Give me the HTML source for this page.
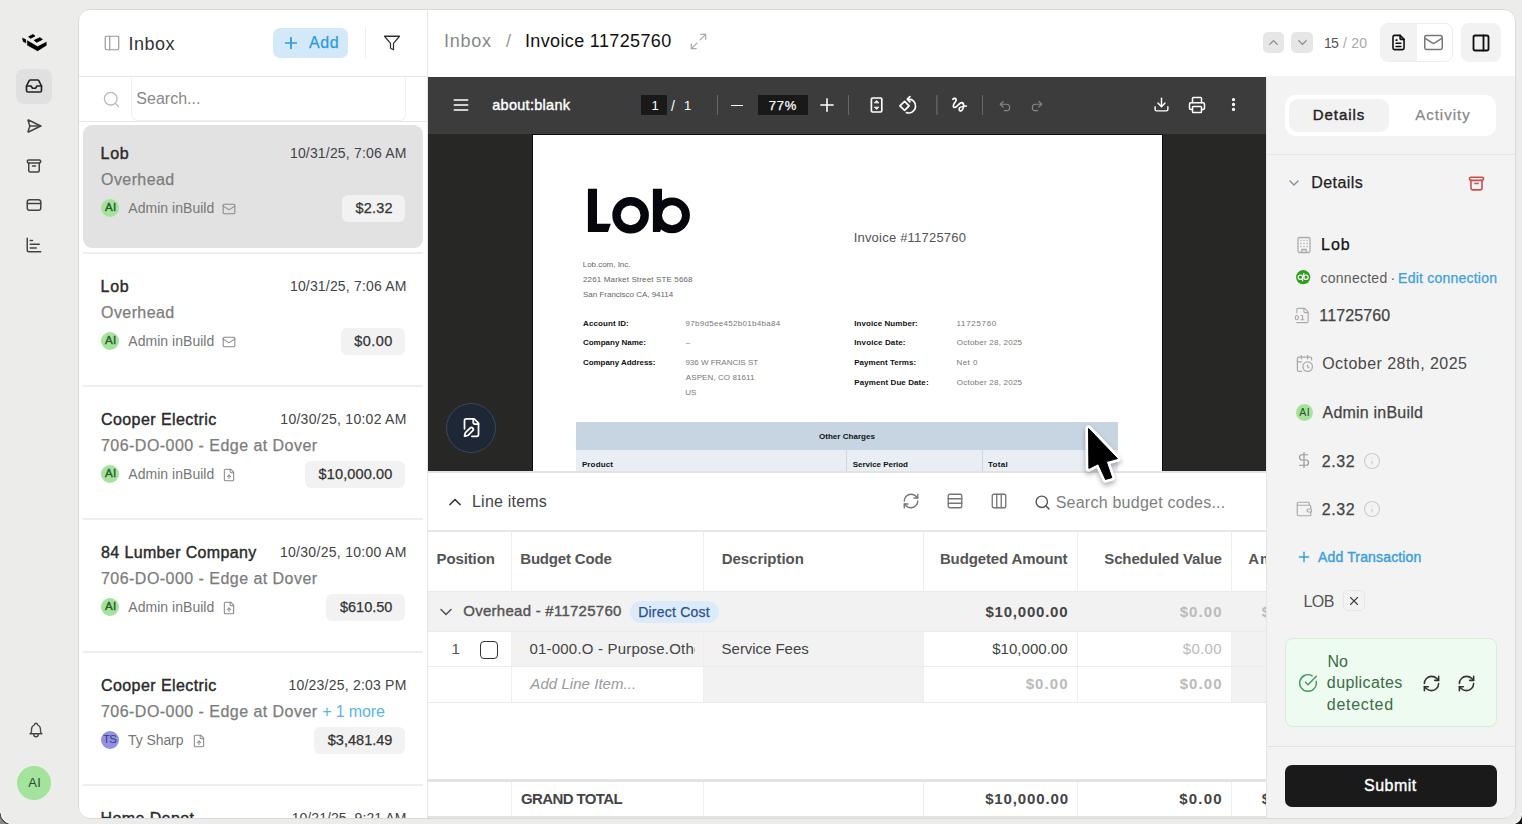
<!DOCTYPE html><html><head><meta charset="utf-8"><style>
*{margin:0;padding:0;box-sizing:border-box}
html,body{width:1522px;height:824px;overflow:hidden}
body{background:#ececeb;font-family:"Liberation Sans",sans-serif;position:relative;color:#333}
.a{position:absolute;display:block}
.t{position:absolute;line-height:1;white-space:nowrap}
#card{position:absolute;left:78px;top:9px;width:1438px;height:810px;border-radius:12px;overflow:hidden;background:#fff}
#inner{position:absolute;left:-78px;top:-9px;width:1522px;height:824px}
#cardb{position:absolute;left:78px;top:9px;width:1438px;height:810px;border-radius:12px;border:1.5px solid #dadada;pointer-events:none}
</style></head><body>

<svg class="a" style="left:20px;top:30px" width="30" height="25" viewBox="20 30 30 25"><polygon points="22.4,37.9 25.9,39.4 25.9,43.1 23.0,41.5" fill="#000" stroke="#000" stroke-width="0.3" stroke-linejoin="round"/><polygon points="27.3,40.6 37.6,46.6 46.4,41.9 46.4,45.4 37.6,50.9 27.3,45.2" fill="#000" stroke="#000" stroke-width="0.3" stroke-linejoin="round"/><polygon points="28.6,36.8 32.9,34.6 35.0,36.0 30.7,38.3" fill="#000" stroke="#000" stroke-width="0.8" stroke-linejoin="round"/><polygon points="34.2,40.3 39.9,37.7 42.4,39.4 36.7,42.3" fill="#000" stroke="#000" stroke-width="0.8" stroke-linejoin="round"/></svg>
<div class="a" style="left:16px;top:69px;width:36px;height:35px;background:#e0e0e0;border-radius:8px"></div>
<svg class="a" style="left:25px;top:77px;" width="18" height="18" viewBox="0 0 24 24" fill="none" stroke="#222" stroke-width="2.2" stroke-linecap="round" stroke-linejoin="round"><polyline points="22 12 16 12 14 15 10 15 8 12 2 12"/><path d="M5.45 5.11 2 12v6a2 2 0 0 0 2 2h16a2 2 0 0 0 2-2v-6l-3.45-6.89A2 2 0 0 0 16.76 4H7.24a2 2 0 0 0-1.79 1.11z"/></svg>
<svg class="a" style="left:25px;top:117px;" width="18" height="18" viewBox="0 0 24 24" fill="none" stroke="#444" stroke-width="2" stroke-linecap="round" stroke-linejoin="round"><path d="M4.698 4.034l16.302 7.966l-16.302 7.966a.503 .503 0 0 1 -.546 -.124a.555 .555 0 0 1 -.12 -.568l2.468 -7.274l-2.468 -7.274a.555 .555 0 0 1 .12 -.568a.503 .503 0 0 1 .546 -.124z"/><path d="M6.5 12h14.5"/></svg>
<svg class="a" style="left:25px;top:157px;" width="18" height="18" viewBox="0 0 24 24" fill="none" stroke="#444" stroke-width="2" stroke-linecap="round" stroke-linejoin="round"><rect x="3" y="4" width="18" height="4" rx="2"/><path d="M5 8v10a2 2 0 0 0 2 2h10a2 2 0 0 0 2-2V8"/><path d="M10 12h4"/></svg>
<svg class="a" style="left:25px;top:196px;" width="18" height="18" viewBox="0 0 24 24" fill="none" stroke="#444" stroke-width="2" stroke-linecap="round" stroke-linejoin="round"><rect x="3" y="5" width="18" height="14" rx="3"/><path d="M3 10h18"/></svg>
<svg class="a" style="left:25px;top:236px;" width="18" height="18" viewBox="0 0 24 24" fill="none" stroke="#444" stroke-width="2" stroke-linecap="round" stroke-linejoin="round"><path d="M3 3v16a2 2 0 0 0 2 2h16"/><path d="M7 16h8"/><path d="M7 11h12"/><path d="M7 6h3"/></svg>
<svg class="a" style="left:27px;top:721px;" width="18" height="18" viewBox="0 0 24 24" fill="none" stroke="#444" stroke-width="1.8" stroke-linecap="round" stroke-linejoin="round"><path d="M10 5a2 2 0 1 1 4 0a7 7 0 0 1 4 6v3a4 4 0 0 0 2 3h-16a4 4 0 0 0 2 -3v-3a7 7 0 0 1 4 -6"/><path d="M9 17v1a3 3 0 0 0 6 0v-1"/></svg>
<div class="a" style="left:17px;top:766px;width:34px;height:34px;background:#a3e39c;border-radius:50%"></div>
<div class="t " style="left:28.20px;top:776.30px;font-size:13px;letter-spacing:0.450px;color:#2f4b2f;">AI</div>
<div id="card"><div id="inner">
<div class="a" style="left:427px;top:9px;width:1px;height:809px;background:#e6e6e6"></div>
<svg class="a" style="left:103px;top:34px;" width="18" height="18" viewBox="0 0 24 24" fill="none" stroke="#999" stroke-width="1.6" stroke-linecap="round" stroke-linejoin="round"><rect width="18" height="18" x="3" y="3" rx="2"/><path d="M9 3v18"/></svg>
<div class="t " style="left:128.58px;top:34.76px;font-size:18px;letter-spacing:0.498px;color:#333;">Inbox</div>
<div class="a" style="left:273px;top:27.5px;width:74.5px;height:30.5px;background:#d3e9fa;border-radius:7px"></div>
<svg class="a" style="left:285px;top:37px;" width="12" height="12" viewBox="5 5 14 14" fill="none" stroke="#2b9be0" stroke-width="2" stroke-linecap="round" stroke-linejoin="round"><path d="M5 12h14"/><path d="M12 5v14"/></svg>
<div class="t " style="left:309.00px;top:34.96px;font-size:16px;letter-spacing:0.530px;-webkit-text-stroke:0.25px currentColor;color:#2b9be0;">Add</div>
<div class="a" style="left:365px;top:27px;width:1px;height:31px;background:#eeeeee"></div>
<svg class="a" style="left:382px;top:34px;" width="20" height="18" viewBox="0 0 24 24" fill="none" stroke="#333" stroke-width="1.7" stroke-linecap="round" stroke-linejoin="round"><polygon points="22 3 2 3 10 12.46 10 19 14 21 14 12.46 22 3"/></svg>
<div class="a" style="left:79px;top:76px;width:348px;height:1px;background:#e6e6e6"></div>
<svg class="a" style="left:102px;top:90px;" width="19" height="19" viewBox="0 0 24 24" fill="none" stroke="#bbb" stroke-width="1.7" stroke-linecap="round" stroke-linejoin="round"><circle cx="11" cy="11" r="8"/><path d="m21 21-4.3-4.3"/></svg>
<div class="a" style="left:131px;top:77px;width:275px;height:44px;border:1px solid #f0f0f0;border-top:none;border-radius:0 0 6px 6px"></div>
<div class="t " style="left:136.28px;top:90.96px;font-size:16px;letter-spacing:0.020px;color:#888;">Search...</div>
<div class="a" style="left:79px;top:121px;width:348px;height:1px;background:#e6e6e6"></div>
<div class="a" style="left:83px;top:125px;width:340px;height:123px;background:#e2e2e2;border-radius:9px"></div>
<div class="a" style="left:83px;top:252px;width:340px;height:2px;background:#eeeeee"></div>
<div class="t " style="left:100.52px;top:146.06px;font-size:16px;letter-spacing:0.740px;-webkit-text-stroke:0.4px currentColor;color:#2a2a2a;">Lob</div>
<div class="t " style="left:289.95px;top:146.05px;font-size:14px;letter-spacing:0.172px;color:#444;">10/31/25, 7:06 AM</div>
<div class="t " style="left:101.08px;top:172.46px;font-size:16px;letter-spacing:0.403px;-webkit-text-stroke:0.25px currentColor;color:#7d7d7d;">Overhead</div>
<div class="a" style="left:100.7px;top:199px;width:18px;height:18px;background:#a3e39c;border-radius:50%"></div>
<div class="t " style="left:104.90px;top:202.07px;font-size:11.5px;letter-spacing:0.325px;-webkit-text-stroke:0.4px currentColor;color:#2a5a2a;">AI</div>
<div class="t " style="left:128.30px;top:200.85px;font-size:14px;letter-spacing:0.033px;color:#777;">Admin inBuild</div>
<svg class="a" style="left:222.4px;top:202px;" width="14" height="14" viewBox="0 0 24 24" fill="none" stroke="#888" stroke-width="1.8" stroke-linecap="round" stroke-linejoin="round"><rect width="20" height="16" x="2" y="4" rx="2"/><path d="m22 7-8.97 5.7a1.94 1.94 0 0 1-2.06 0L2 7"/></svg>
<div class="a" style="left:341.9px;top:195px;width:63.6px;height:26.5px;background:#f2f2f2;border-radius:6px"></div>
<div class="t " style="left:355.56px;top:200.73px;font-size:14.5px;letter-spacing:0.180px;-webkit-text-stroke:0.25px currentColor;color:#333;">$2.32</div>
<div class="a" style="left:83px;top:385px;width:340px;height:2px;background:#eeeeee"></div>
<div class="t " style="left:100.52px;top:279.06px;font-size:16px;letter-spacing:0.740px;-webkit-text-stroke:0.4px currentColor;color:#2a2a2a;">Lob</div>
<div class="t " style="left:289.95px;top:279.05px;font-size:14px;letter-spacing:0.172px;color:#444;">10/31/25, 7:06 AM</div>
<div class="t " style="left:101.08px;top:305.46px;font-size:16px;letter-spacing:0.403px;-webkit-text-stroke:0.25px currentColor;color:#7d7d7d;">Overhead</div>
<div class="a" style="left:100.7px;top:332px;width:18px;height:18px;background:#a3e39c;border-radius:50%"></div>
<div class="t " style="left:104.90px;top:335.07px;font-size:11.5px;letter-spacing:0.325px;-webkit-text-stroke:0.4px currentColor;color:#2a5a2a;">AI</div>
<div class="t " style="left:128.30px;top:333.85px;font-size:14px;letter-spacing:0.033px;color:#777;">Admin inBuild</div>
<svg class="a" style="left:222.4px;top:335px;" width="14" height="14" viewBox="0 0 24 24" fill="none" stroke="#888" stroke-width="1.8" stroke-linecap="round" stroke-linejoin="round"><rect width="20" height="16" x="2" y="4" rx="2"/><path d="m22 7-8.97 5.7a1.94 1.94 0 0 1-2.06 0L2 7"/></svg>
<div class="a" style="left:340.6px;top:328px;width:64.9px;height:26.5px;background:#f2f2f2;border-radius:6px"></div>
<div class="t " style="left:354.26px;top:333.73px;font-size:14.5px;letter-spacing:0.451px;-webkit-text-stroke:0.25px currentColor;color:#333;">$0.00</div>
<div class="a" style="left:83px;top:518px;width:340px;height:2px;background:#eeeeee"></div>
<div class="t " style="left:101.00px;top:412.06px;font-size:16px;letter-spacing:0.424px;-webkit-text-stroke:0.4px currentColor;color:#2a2a2a;">Cooper Electric</div>
<div class="t " style="left:280.35px;top:412.05px;font-size:14px;letter-spacing:0.270px;color:#444;">10/30/25, 10:02 AM</div>
<div class="t " style="left:101.00px;top:438.46px;font-size:16px;letter-spacing:0.462px;-webkit-text-stroke:0.25px currentColor;color:#7d7d7d;">706-DO-000 - Edge at Dover</div>
<div class="a" style="left:100.7px;top:465px;width:18px;height:18px;background:#a3e39c;border-radius:50%"></div>
<div class="t " style="left:104.90px;top:468.07px;font-size:11.5px;letter-spacing:0.325px;-webkit-text-stroke:0.4px currentColor;color:#2a5a2a;">AI</div>
<div class="t " style="left:128.30px;top:466.85px;font-size:14px;letter-spacing:0.033px;color:#777;">Admin inBuild</div>
<svg class="a" style="left:222.4px;top:468px;" width="14" height="14" viewBox="0 0 24 24" fill="none" stroke="#888" stroke-width="1.8" stroke-linecap="round" stroke-linejoin="round"><path d="M15 2H6a2 2 0 0 0-2 2v16a2 2 0 0 0 2 2h12a2 2 0 0 0 2-2V7Z"/><path d="M14 2v4a2 2 0 0 0 2 2h4"/><path d="M12 12v6"/><path d="m15 15-3-3-3 3"/></svg>
<div class="a" style="left:304.9px;top:461px;width:100.6px;height:26.5px;background:#f2f2f2;border-radius:6px"></div>
<div class="t " style="left:318.56px;top:466.73px;font-size:14.5px;letter-spacing:0.131px;-webkit-text-stroke:0.25px currentColor;color:#333;">$10,000.00</div>
<div class="a" style="left:83px;top:651px;width:340px;height:2px;background:#eeeeee"></div>
<div class="t " style="left:101.08px;top:545.06px;font-size:16px;letter-spacing:0.361px;-webkit-text-stroke:0.4px currentColor;color:#2a2a2a;">84 Lumber Company</div>
<div class="t " style="left:279.95px;top:545.05px;font-size:14px;letter-spacing:0.294px;color:#444;">10/30/25, 10:00 AM</div>
<div class="t " style="left:101.00px;top:571.46px;font-size:16px;letter-spacing:0.462px;-webkit-text-stroke:0.25px currentColor;color:#7d7d7d;">706-DO-000 - Edge at Dover</div>
<div class="a" style="left:100.7px;top:598px;width:18px;height:18px;background:#a3e39c;border-radius:50%"></div>
<div class="t " style="left:104.90px;top:601.07px;font-size:11.5px;letter-spacing:0.325px;-webkit-text-stroke:0.4px currentColor;color:#2a5a2a;">AI</div>
<div class="t " style="left:128.30px;top:599.85px;font-size:14px;letter-spacing:0.033px;color:#777;">Admin inBuild</div>
<svg class="a" style="left:222.4px;top:601px;" width="14" height="14" viewBox="0 0 24 24" fill="none" stroke="#888" stroke-width="1.8" stroke-linecap="round" stroke-linejoin="round"><path d="M15 2H6a2 2 0 0 0-2 2v16a2 2 0 0 0 2 2h12a2 2 0 0 0 2-2V7Z"/><path d="M14 2v4a2 2 0 0 0 2 2h4"/><path d="M12 12v6"/><path d="m15 15-3-3-3 3"/></svg>
<div class="a" style="left:326.4px;top:594px;width:79.1px;height:26.5px;background:#f2f2f2;border-radius:6px"></div>
<div class="t " style="left:340.06px;top:599.73px;font-size:14.5px;letter-spacing:-0.027px;-webkit-text-stroke:0.25px currentColor;color:#333;">$610.50</div>
<div class="a" style="left:83px;top:784px;width:340px;height:2px;background:#eeeeee"></div>
<div class="t " style="left:101.00px;top:678.06px;font-size:16px;letter-spacing:0.424px;-webkit-text-stroke:0.4px currentColor;color:#2a2a2a;">Cooper Electric</div>
<div class="t " style="left:288.45px;top:678.05px;font-size:14px;letter-spacing:0.218px;color:#444;">10/23/25, 2:03 PM</div>
<div class="t " style="left:101.00px;top:704.46px;font-size:16px;letter-spacing:0.462px;-webkit-text-stroke:0.25px currentColor;color:#7d7d7d;">706-DO-000 - Edge at Dover</div>
<div class="t " style="left:322.30px;top:704.46px;font-size:16px;letter-spacing:-0.154px;color:#5ab4ea;">+ 1 more</div>
<div class="a" style="left:100.7px;top:731px;width:18px;height:18px;background:#9391e3;border-radius:50%"></div>
<div class="t " style="left:102.97px;top:734.07px;font-size:11.5px;letter-spacing:-0.815px;color:#3b3a7a;">TS</div>
<div class="t " style="left:128.02px;top:732.85px;font-size:14px;letter-spacing:-0.080px;color:#777;">Ty Sharp</div>
<svg class="a" style="left:191.9px;top:734px;" width="14" height="14" viewBox="0 0 24 24" fill="none" stroke="#888" stroke-width="1.8" stroke-linecap="round" stroke-linejoin="round"><path d="M15 2H6a2 2 0 0 0-2 2v16a2 2 0 0 0 2 2h12a2 2 0 0 0 2-2V7Z"/><path d="M14 2v4a2 2 0 0 0 2 2h4"/><path d="M12 12v6"/><path d="m15 15-3-3-3 3"/></svg>
<div class="a" style="left:314.1px;top:727px;width:91.4px;height:26.5px;background:#f2f2f2;border-radius:6px"></div>
<div class="t " style="left:327.76px;top:732.73px;font-size:14.5px;letter-spacing:0.022px;-webkit-text-stroke:0.25px currentColor;color:#333;">$3,481.49</div>
<div class="a" style="left:83px;top:917px;width:340px;height:2px;background:#eeeeee"></div>
<div class="t " style="left:100.52px;top:811.06px;font-size:16px;letter-spacing:0.400px;-webkit-text-stroke:0.4px currentColor;color:#2a2a2a;">Home Depot</div>
<div class="t " style="left:291.65px;top:811.05px;font-size:14px;letter-spacing:0.066px;color:#444;">10/21/25, 9:21 AM</div>
<div class="t " style="left:444.08px;top:31.76px;font-size:18px;letter-spacing:0.697px;color:#888;">Inbox</div>
<div class="t " style="left:506px;top:31.76px;font-size:18px;color:#999;">/</div>
<div class="t " style="left:524.98px;top:31.76px;font-size:18px;letter-spacing:0.359px;color:#111;">Invoice 11725760</div>
<svg class="a" style="left:689px;top:31.7px;" width="19" height="19" viewBox="0 0 24 24" fill="none" stroke="#aaa" stroke-width="1.6" stroke-linecap="round" stroke-linejoin="round"><path d="M15 3h6v6"/><path d="M9 21H3v-6"/><path d="M21 3l-7 7"/><path d="M3 21l7-7"/></svg>
<div class="a" style="left:1263px;top:32px;width:21px;height:21px;background:#e6e6e6;border-radius:5px"></div>
<svg class="a" style="left:1266px;top:35px;" width="15" height="15" viewBox="0 0 24 24" fill="none" stroke="#888" stroke-width="2" stroke-linecap="round" stroke-linejoin="round"><path d="m18 15-6-6-6 6"/></svg>
<div class="a" style="left:1291px;top:32px;width:22px;height:21px;background:#e6e6e6;border-radius:5px"></div>
<svg class="a" style="left:1294.5px;top:35px;" width="15" height="15" viewBox="0 0 24 24" fill="none" stroke="#888" stroke-width="2" stroke-linecap="round" stroke-linejoin="round"><path d="m6 9 6 6 6-6"/></svg>
<div class="t " style="left:1323.95px;top:35.95px;font-size:14px;letter-spacing:-0.730px;color:#555;">15</div>
<div class="t " style="left:1343.00px;top:35.95px;font-size:14px;letter-spacing:0.193px;color:#aaa;">/ 20</div>
<div class="a" style="left:1380px;top:23px;width:73px;height:39px;border:1px solid #eeeeee;border-radius:8px;overflow:hidden"></div>
<div class="a" style="left:1381px;top:24px;width:36px;height:37px;background:#f2f2f2;border-radius:7px 0 0 7px"></div>
<svg class="a" style="left:1389px;top:33px;" width="19" height="19" viewBox="0 0 24 24" fill="none" stroke="#111" stroke-width="2" stroke-linecap="round" stroke-linejoin="round"><path d="M14 3v4a1 1 0 0 0 1 1h4"/><path d="M17 21h-10a2 2 0 0 1 -2 -2v-14a2 2 0 0 1 2 -2h7l5 5v11a2 2 0 0 1 -2 2z"/><path d="M9 9l1 0"/><path d="M9 13l6 0"/><path d="M9 17l6 0"/></svg>
<svg class="a" style="left:1423px;top:32px;" width="21" height="21" viewBox="0 0 24 24" fill="none" stroke="#777" stroke-width="1.7" stroke-linecap="round" stroke-linejoin="round"><rect width="20" height="16" x="2" y="4" rx="2"/><path d="m22 7-8.97 5.7a1.94 1.94 0 0 1-2.06 0L2 7"/></svg>
<div class="a" style="left:1461px;top:23px;width:40px;height:39px;background:#f2f2f2;border-radius:8px"></div>
<svg class="a" style="left:1471px;top:33px;" width="20" height="20" viewBox="0 0 24 24" fill="none" stroke="#111" stroke-width="2.2" stroke-linecap="round" stroke-linejoin="round"><rect width="18" height="18" x="3" y="3" rx="2"/><path d="M15 3v18"/></svg>
<div class="a" style="left:1266px;top:75.5px;width:249px;height:1px;background:#e6e6e6"></div>
<div class="a" style="left:428px;top:77px;width:838px;height:395px;background:#272725"></div>
<div class="a" style="left:428px;top:77px;width:838px;height:57px;background:#3c3c3c"></div>
<svg class="a" style="left:451px;top:95px;" width="20" height="20" viewBox="0 0 24 24" fill="none" stroke="#fff" stroke-width="2" stroke-linecap="round" stroke-linejoin="round"><path d="M4 6h16"/><path d="M4 12h16"/><path d="M4 18h16"/></svg>
<div class="t " style="left:492.22px;top:97.73px;font-size:14.5px;letter-spacing:0.281px;-webkit-text-stroke:0.4px currentColor;color:#fff;">about:blank</div>
<div class="a" style="left:641px;top:95px;width:26px;height:20px;background:#191919"></div>
<div class="t " style="left:651.5px;top:99.00px;font-size:13px;color:#fff;">1</div>
<div class="t " style="left:671px;top:99.15px;font-size:14px;color:#fff;">/</div>
<div class="t " style="left:684px;top:99.00px;font-size:13px;color:#fff;">1</div>
<div class="a" style="left:716.5px;top:95px;width:1px;height:20px;background:#666"></div>
<div class="a" style="left:731px;top:104.5px;width:12px;height:1.6px;background:#fff"></div>
<div class="a" style="left:757.5px;top:95px;width:50px;height:20px;background:#191919"></div>
<div class="t " style="left:768.65px;top:99.00px;font-size:13px;letter-spacing:0.803px;-webkit-text-stroke:0.25px currentColor;color:#fff;">77%</div>
<svg class="a" style="left:820px;top:98px;" width="14" height="14" viewBox="4 4 16 16" fill="none" stroke="#fff" stroke-width="1.8" stroke-linecap="round" stroke-linejoin="round"><path d="M5 12h14"/><path d="M12 5v14"/></svg>
<div class="a" style="left:847.5px;top:95px;width:1px;height:20px;background:#666"></div>
<svg class="a" style="left:860px;top:90px" width="115" height="30" viewBox="860 90 115 30" fill="none" stroke="#fff" stroke-width="1.7" stroke-linecap="round" stroke-linejoin="round"><rect x="871.4" y="98" width="10.4" height="14" rx="1.2"/><path d="M874.6 102.6 L876.6 100.6 L878.6 102.6 Z" fill="#fff" stroke-width="0.9"/><path d="M874.6 107.4 L876.6 109.4 L878.6 107.4 Z" fill="#fff" stroke-width="0.9"/><path d="M899.9 105.9 L904.6 101.3 L909.1 105.9 L904.6 110.4 Z"/><path d="M908 99.2 A6.9 6.9 0 1 1 906.5 112.6"/><path d="M909.9 96.6 L907.3 99.2 L909.9 101.8"/><path d="M952.9 99.3 C954 97.5 956.5 98.3 956.1 100.4 C955.8 102 953 104 953.3 106 C953.5 108.5 956 107.5 957.7 105.5 C959.5 103.5 961 102.3 962 102.6 C964.5 103.3 963.8 108 962.2 110 C961 111.5 959 111.2 959.1 109 C959.2 106.8 962.5 106.2 966.3 106"/><path d="M936.9 95.5 L936.9 114.5" stroke="#6a6a6a" stroke-width="1.2"/></svg>
<div class="a" style="left:981.5px;top:95px;width:1px;height:20px;background:#666"></div>
<svg class="a" style="left:997.5px;top:98.5px;" width="14" height="14" viewBox="0 0 24 24" fill="none" stroke="#888" stroke-width="2" stroke-linecap="round" stroke-linejoin="round"><path d="M9 14 4 9l5-5"/><path d="M4 9h10.5a5.5 5.5 0 0 1 5.5 5.5a5.5 5.5 0 0 1-5.5 5.5H11"/></svg>
<svg class="a" style="left:1029.5px;top:98.5px;" width="14" height="14" viewBox="0 0 24 24" fill="none" stroke="#888" stroke-width="2" stroke-linecap="round" stroke-linejoin="round"><path d="m15 14 5-5-5-5"/><path d="M20 9H9.5A5.5 5.5 0 0 0 4 14.5A5.5 5.5 0 0 0 9.5 20H13"/></svg>
<svg class="a" style="left:1153px;top:96px;" width="17" height="17" viewBox="0 0 24 24" fill="none" stroke="#fff" stroke-width="2" stroke-linecap="round" stroke-linejoin="round"><path d="M21 15v4a2 2 0 0 1-2 2H5a2 2 0 0 1-2-2v-4"/><polyline points="7 10 12 15 17 10"/><line x1="12" x2="12" y1="15" y2="3"/></svg>
<svg class="a" style="left:1187px;top:96px;" width="20" height="18" viewBox="0 0 24 24" fill="none" stroke="#fff" stroke-width="2" stroke-linecap="round" stroke-linejoin="round"><path d="M6 18H4a2 2 0 0 1-2-2v-5a2 2 0 0 1 2-2h16a2 2 0 0 1 2 2v5a2 2 0 0 1-2 2h-2"/><path d="M6 9V3a1 1 0 0 1 1-1h10a1 1 0 0 1 1 1v6"/><rect x="6" y="14" width="12" height="8" rx="1"/></svg>
<svg class="a" style="left:1225px;top:96px;" width="17" height="17" viewBox="0 0 24 24" fill="none" stroke="#fff" stroke-width="2.6" stroke-linecap="round" stroke-linejoin="round"><circle cx="12" cy="12" r="1"/><circle cx="12" cy="5" r="1"/><circle cx="12" cy="19" r="1"/></svg>
<div class="a" style="left:532px;top:134px;width:631px;height:338px;background:#0e0e0e"></div>
<div class="a" style="left:533px;top:135px;width:629px;height:336.5px;background:#fff;overflow:hidden">
<div class="a" style="left:-533px;top:-135px;width:1522px;height:824px">
<svg class="a" style="left:580px;top:180px" width="120" height="60" viewBox="580 180 120 60"><path d="M587.9 188.7 H597 V223.8 H610.8 L608 232 H587.9 Z" fill="#05070c"/><circle cx="630.6" cy="215.3" r="14.1" stroke="#05070c" stroke-width="8.4" fill="none"/><path d="M652.9 188.7 H662 V227 L660 232 H652.9 Z" fill="#05070c"/><circle cx="672" cy="215.3" r="13.95" stroke="#05070c" stroke-width="7.9" fill="none"/></svg>
<div class="t " style="left:582.76px;top:261.23px;font-size:8px;letter-spacing:-0.028px;color:#666;">Lob.com, Inc.</div>
<div class="t " style="left:583.00px;top:276.23px;font-size:8px;letter-spacing:0.142px;color:#666;">2261 Market Street STE 5668</div>
<div class="t " style="left:583.04px;top:290.63px;font-size:8px;letter-spacing:-0.016px;color:#666;">San Francisco CA, 94114</div>
<div class="t " style="left:853.63px;top:230.80px;font-size:13px;letter-spacing:0.216px;color:#555;">Invoice #11725760</div>
<div class="t " style="left:583.10px;top:320.23px;font-size:8px;letter-spacing:0.078px;font-weight:bold;color:#111;">Account ID:</div>
<div class="t " style="left:685.44px;top:320.23px;font-size:8px;letter-spacing:0.307px;color:#777;">97b9d5ee452b01b4ba84</div>
<div class="t " style="left:582.98px;top:339.43px;font-size:8px;letter-spacing:-0.012px;font-weight:bold;color:#111;">Company Name:</div>
<div class="t " style="left:685.80px;top:339.43px;font-size:8px;letter-spacing:-0.640px;color:#777;">–</div>
<div class="t " style="left:582.98px;top:358.73px;font-size:8px;letter-spacing:-0.044px;font-weight:bold;color:#111;">Company Address:</div>
<div class="t " style="left:685.44px;top:358.73px;font-size:8px;letter-spacing:-0.017px;color:#777;">936 W FRANCIS ST</div>
<div class="t " style="left:685.80px;top:373.73px;font-size:8px;letter-spacing:0.087px;color:#777;">ASPEN, CO 81611</div>
<div class="t " style="left:685.20px;top:388.63px;font-size:8px;letter-spacing:0.080px;color:#777;">US</div>
<div class="t " style="left:854.28px;top:320.23px;font-size:8px;letter-spacing:0.060px;font-weight:bold;color:#111;">Invoice Number:</div>
<div class="t " style="left:956.60px;top:320.23px;font-size:8px;letter-spacing:0.669px;color:#777;">11725760</div>
<div class="t " style="left:854.28px;top:339.43px;font-size:8px;letter-spacing:0.110px;font-weight:bold;color:#111;">Invoice Date:</div>
<div class="t " style="left:956.84px;top:339.43px;font-size:8px;letter-spacing:0.225px;color:#777;">October 28, 2025</div>
<div class="t " style="left:854.28px;top:358.83px;font-size:8px;letter-spacing:0.011px;font-weight:bold;color:#111;">Payment Terms:</div>
<div class="t " style="left:956.56px;top:358.83px;font-size:8px;letter-spacing:0.425px;color:#777;">Net 0</div>
<div class="t " style="left:854.28px;top:378.53px;font-size:8px;letter-spacing:0.087px;font-weight:bold;color:#111;">Payment Due Date:</div>
<div class="t " style="left:956.84px;top:378.53px;font-size:8px;letter-spacing:0.225px;color:#777;">October 28, 2025</div>
<div class="a" style="left:576px;top:422px;width:542px;height:28px;background:#c7d5e3"></div>
<div class="t " style="left:818.98px;top:433.23px;font-size:8px;letter-spacing:0.032px;font-weight:bold;color:#111;">Other Charges</div>
<div class="a" style="left:576px;top:450px;width:542px;height:30px;background:#e8eef3"></div>
<div class="a" style="left:846px;top:450px;width:1px;height:30px;background:#cfd8e0"></div>
<div class="a" style="left:982px;top:450px;width:1px;height:30px;background:#cfd8e0"></div>
<div class="t " style="left:581.88px;top:461.23px;font-size:8px;letter-spacing:0.150px;font-weight:bold;color:#111;">Product</div>
<div class="t " style="left:852.76px;top:461.23px;font-size:8px;letter-spacing:-0.026px;font-weight:bold;color:#111;">Service Period</div>
<div class="t " style="left:987.92px;top:461.23px;font-size:8px;letter-spacing:0.355px;font-weight:bold;color:#111;">Total</div>
</div></div>
<div class="a" style="left:446px;top:403px;width:50px;height:50px;background:#1e2735;border:1px solid #3b4757;border-radius:50%"></div>
<svg class="a" style="left:461px;top:417px;" width="21" height="21" viewBox="0 0 24 24" fill="none" stroke="#fff" stroke-width="2" stroke-linecap="round" stroke-linejoin="round"><path d="M12.5 22H18a2 2 0 0 0 2-2V7l-5-5H6a2 2 0 0 0-2 2v9.5"/><path d="M14 2v4a2 2 0 0 0 2 2h4"/><path d="M13.378 15.626a1 1 0 1 0-3.004-3.004l-5.01 5.012a2 2 0 0 0-.506.854l-.837 2.87a.5.5 0 0 0 .62.62l2.87-.837a2 2 0 0 0 .854-.506z"/></svg>
<div class="a" style="left:428px;top:471px;width:838px;height:1.5px;background:#e3e3e3"></div>
<svg class="a" style="left:445px;top:491.5px;" width="20" height="20" viewBox="0 0 24 24" fill="none" stroke="#333" stroke-width="2" stroke-linecap="round" stroke-linejoin="round"><path d="m18 15-6-6-6 6"/></svg>
<div class="t " style="left:472.02px;top:494.26px;font-size:16px;letter-spacing:0.209px;color:#444;">Line items</div>
<svg class="a" style="left:902px;top:492px;" width="18" height="18" viewBox="0 0 24 24" fill="none" stroke="#777" stroke-width="1.8" stroke-linecap="round" stroke-linejoin="round"><path d="M3 12a9 9 0 0 1 9-9 9.75 9.75 0 0 1 6.74 2.74L21 8"/><path d="M21 3v5h-5"/><path d="M21 12a9 9 0 0 1-9 9 9.75 9.75 0 0 1-6.74-2.74L3 16"/><path d="M8 16H3v5"/></svg>
<svg class="a" style="left:946px;top:492px;" width="18" height="18" viewBox="0 0 24 24" fill="none" stroke="#777" stroke-width="1.8" stroke-linecap="round" stroke-linejoin="round"><rect width="18" height="18" x="3" y="3" rx="2"/><path d="M3 9h18"/><path d="M3 15h18"/></svg>
<svg class="a" style="left:990px;top:492px;" width="18" height="18" viewBox="0 0 24 24" fill="none" stroke="#777" stroke-width="1.8" stroke-linecap="round" stroke-linejoin="round"><rect width="18" height="18" x="3" y="3" rx="2"/><path d="M9 3v18"/><path d="M15 3v18"/></svg>
<svg class="a" style="left:1034px;top:493.5px;" width="17" height="17" viewBox="0 0 24 24" fill="none" stroke="#555" stroke-width="2" stroke-linecap="round" stroke-linejoin="round"><circle cx="11" cy="11" r="8"/><path d="m21 21-4.3-4.3"/></svg>
<div class="t " style="left:1055.68px;top:495.06px;font-size:16px;letter-spacing:0.237px;color:#808080;">Search budget codes...</div>
<div class="a" style="left:428px;top:530px;width:838px;height:1.5px;background:#e6e6e6"></div>
<div class="a" style="left:428px;top:592px;width:838px;height:39px;background:#f2f2f2"></div>
<div class="a" style="left:428px;top:591px;width:838px;height:1px;background:#e9e9e9"></div>
<div class="a" style="left:511px;top:631px;width:192px;height:35px;background:#f2f2f2"></div>
<div class="a" style="left:703px;top:631px;width:220px;height:71px;background:#f2f2f2"></div>
<div class="a" style="left:1231px;top:631px;width:35px;height:71px;background:#f2f2f2"></div>
<div class="a" style="left:428px;top:631px;width:838px;height:1px;background:#ebebeb"></div>
<div class="a" style="left:428px;top:666px;width:838px;height:1px;background:#ebebeb"></div>
<div class="a" style="left:428px;top:701.5px;width:838px;height:1px;background:#e9e9e9"></div>
<div class="a" style="left:511px;top:531px;width:1px;height:61px;background:#eeeeee"></div>
<div class="a" style="left:511px;top:631px;width:1px;height:71px;background:#eeeeee"></div>
<div class="a" style="left:703px;top:531px;width:1px;height:61px;background:#eeeeee"></div>
<div class="a" style="left:703px;top:631px;width:1px;height:71px;background:#eeeeee"></div>
<div class="a" style="left:923px;top:531px;width:1px;height:61px;background:#eeeeee"></div>
<div class="a" style="left:923px;top:631px;width:1px;height:71px;background:#eeeeee"></div>
<div class="a" style="left:1077px;top:531px;width:1px;height:61px;background:#eeeeee"></div>
<div class="a" style="left:1077px;top:631px;width:1px;height:71px;background:#eeeeee"></div>
<div class="a" style="left:1231px;top:531px;width:1px;height:61px;background:#eeeeee"></div>
<div class="a" style="left:1231px;top:631px;width:1px;height:71px;background:#eeeeee"></div>
<div class="t " style="left:436.52px;top:550.70px;font-size:15px;letter-spacing:-0.114px;font-weight:bold;color:#555;">Position</div>
<div class="t " style="left:520.23px;top:550.70px;font-size:15px;letter-spacing:-0.170px;font-weight:bold;color:#555;">Budget Code</div>
<div class="t " style="left:721.73px;top:550.70px;font-size:15px;letter-spacing:-0.043px;font-weight:bold;color:#555;">Description</div>
<div class="t " style="left:939.92px;top:550.70px;font-size:15px;letter-spacing:-0.132px;font-weight:bold;color:#555;">Budgeted Amount</div>
<div class="t " style="left:1104.25px;top:550.70px;font-size:15px;letter-spacing:-0.121px;font-weight:bold;color:#555;">Scheduled Value</div>
<div class="t " style="left:1248.22px;top:550.70px;font-size:15px;letter-spacing:1.060px;font-weight:bold;color:#555;">Amount</div>
<svg class="a" style="left:436.3px;top:601.5px;" width="20" height="20" viewBox="0 0 24 24" fill="none" stroke="#555" stroke-width="1.9" stroke-linecap="round" stroke-linejoin="round"><path d="m6 9 6 6 6-6"/></svg>
<div class="t " style="left:463.32px;top:603.10px;font-size:15px;letter-spacing:0.255px;-webkit-text-stroke:0.4px currentColor;color:#555;">Overhead - #11725760</div>
<div class="a" style="left:629.5px;top:601px;width:89px;height:22px;background:#dcebfb;border-radius:11px"></div>
<div class="t " style="left:638.18px;top:604.65px;font-size:14px;letter-spacing:0.216px;-webkit-text-stroke:0.25px currentColor;color:#2c4f8f;">Direct Cost</div>
<div class="t " style="left:985.38px;top:603.80px;font-size:15px;letter-spacing:0.794px;font-weight:bold;color:#444;">$10,000.00</div>
<div class="t " style="left:1179.68px;top:603.80px;font-size:15px;letter-spacing:1.106px;font-weight:bold;color:#bbb;">$0.00</div>
<div class="t " style="left:1261.78px;top:603.80px;font-size:15px;letter-spacing:1.081px;font-weight:bold;color:#bbb;">$0.00</div>
<div class="t " style="left:451.6px;top:641.30px;font-size:15px;color:#555;">1</div>
<div class="a" style="left:480px;top:640.5px;width:18px;height:18px;border:1.6px solid #333;border-radius:4px;background:#fff"></div>
<div class="a" style="left:529px;top:641px;width:166px;height:18px;overflow:hidden"><div class="t" style="left:0.5px;top:0.3px;font-size:15px;color:#444;letter-spacing:0.2px">01-000.O - Purpose.Other</div></div>
<div class="t " style="left:721.62px;top:641.30px;font-size:15px;letter-spacing:-0.039px;color:#444;">Service Fees</div>
<div class="t " style="left:992.25px;top:641.30px;font-size:15px;letter-spacing:0.022px;color:#444;">$10,000.00</div>
<div class="t " style="left:1182.85px;top:641.30px;font-size:15px;letter-spacing:0.294px;color:#bbb;">$0.00</div>
<div class="t " style="left:530.35px;top:676.30px;font-size:15px;letter-spacing:0.050px;font-style:italic;color:#999;">Add Line Item...</div>
<div class="t " style="left:1025.68px;top:676.30px;font-size:15px;letter-spacing:1.106px;font-weight:bold;color:#bbb;">$0.00</div>
<div class="t " style="left:1179.68px;top:676.30px;font-size:15px;letter-spacing:1.106px;font-weight:bold;color:#bbb;">$0.00</div>
<div class="a" style="left:428px;top:779px;width:838px;height:3px;background:#e3e3e3"></div>
<div class="a" style="left:428px;top:816px;width:838px;height:2px;background:#e3e3e3"></div>
<div class="a" style="left:511px;top:782px;width:1px;height:34px;background:#eeeeee"></div>
<div class="a" style="left:703px;top:782px;width:1px;height:34px;background:#eeeeee"></div>
<div class="a" style="left:923px;top:782px;width:1px;height:34px;background:#eeeeee"></div>
<div class="a" style="left:1077px;top:782px;width:1px;height:34px;background:#eeeeee"></div>
<div class="a" style="left:1231px;top:782px;width:1px;height:34px;background:#eeeeee"></div>
<div class="t " style="left:521.00px;top:790.90px;font-size:15px;letter-spacing:-0.612px;font-weight:bold;color:#444;">GRAND TOTAL</div>
<div class="t " style="left:985.17px;top:790.90px;font-size:15px;letter-spacing:0.872px;font-weight:bold;color:#444;">$10,000.00</div>
<div class="t " style="left:1179.28px;top:790.90px;font-size:15px;letter-spacing:1.206px;font-weight:bold;color:#444;">$0.00</div>
<div class="t " style="left:1261.78px;top:790.90px;font-size:15px;letter-spacing:1.081px;font-weight:bold;color:#444;">$0.00</div>
<div class="a" style="left:1266px;top:76px;width:250px;height:743px;background:#f3f3f3;border-left:1px solid #e6e6e6"></div>
<div class="a" style="left:1285px;top:95px;width:211px;height:41px;background:#fff;border-radius:11px"></div>
<div class="a" style="left:1289px;top:99px;width:100px;height:33px;background:#f2f2f2;border-radius:9px"></div>
<div class="t " style="left:1312.80px;top:107.30px;font-size:15px;letter-spacing:0.933px;-webkit-text-stroke:0.4px currentColor;color:#222;">Details</div>
<div class="t " style="left:1415.20px;top:107.30px;font-size:15px;letter-spacing:1.004px;-webkit-text-stroke:0.25px currentColor;color:#888;">Activity</div>
<div class="a" style="left:1267px;top:153.5px;width:248px;height:1px;background:#e6e6e6"></div>
<svg class="a" style="left:1286px;top:175px;" width="16" height="16" viewBox="0 0 24 24" fill="none" stroke="#888" stroke-width="1.8" stroke-linecap="round" stroke-linejoin="round"><path d="m6 9 6 6 6-6"/></svg>
<div class="t " style="left:1311.32px;top:175.46px;font-size:16px;letter-spacing:0.427px;-webkit-text-stroke:0.25px currentColor;color:#222;">Details</div>
<svg class="a" style="left:1467px;top:174px;" width="19" height="19" viewBox="0 0 24 24" fill="none" stroke="#d24a4a" stroke-width="2" stroke-linecap="round" stroke-linejoin="round"><rect x="3" y="4" width="18" height="4" rx="2"/><path d="M5 8v10a2 2 0 0 0 2 2h10a2 2 0 0 0 2-2V8"/><path d="M10 12h4"/></svg>
<svg class="a" style="left:1295px;top:236px;" width="18" height="18" viewBox="0 0 24 24" fill="none" stroke="#aaa" stroke-width="1.7" stroke-linecap="round" stroke-linejoin="round"><rect width="16" height="20" x="4" y="2" rx="2" ry="2"/><path d="M9 22v-4h6v4"/><path d="M8 6h.01"/><path d="M16 6h.01"/><path d="M12 6h.01"/><path d="M12 10h.01"/><path d="M12 14h.01"/><path d="M16 10h.01"/><path d="M16 14h.01"/><path d="M8 10h.01"/><path d="M8 14h.01"/></svg>
<div class="t " style="left:1321.02px;top:237.46px;font-size:16px;letter-spacing:0.990px;-webkit-text-stroke:0.25px currentColor;color:#111;">Lob</div>
<svg class="a" style="left:1294px;top:268px" width="18" height="18" viewBox="1294 268 18 18"><circle cx="1303.2" cy="277.2" r="7.1" fill="#2ca01c"/><circle cx="1300.4" cy="277.2" r="2.2" fill="none" stroke="#fff" stroke-width="1.2"/><circle cx="1306" cy="277.2" r="2.2" fill="none" stroke="#fff" stroke-width="1.2"/><path d="M1302.6 277.2 V281.3 M1303.8 273.1 V277.2" stroke="#fff" stroke-width="1.2"/></svg>
<div class="t " style="left:1320.44px;top:270.85px;font-size:14px;letter-spacing:0.270px;color:#5c5c5c;">connected</div>
<div class="t " style="left:1390.6px;top:270.85px;font-size:14px;color:#5c5c5c;">·</div>
<div class="t " style="left:1398.08px;top:270.85px;font-size:14px;letter-spacing:0.224px;-webkit-text-stroke:0.25px currentColor;color:#3aa0de;">Edit connection</div>
<svg class="a" style="left:1294px;top:307px;" width="17" height="17" viewBox="0 0 24 24" fill="none" stroke="#aaa" stroke-width="1.6" stroke-linecap="round" stroke-linejoin="round"><path d="M4 22h14a2 2 0 0 0 2-2V7l-5-5H6a2 2 0 0 0-2 2v4"/><path d="M14 2v4a2 2 0 0 0 2 2h4"/><rect width="4" height="6" x="2" y="12" rx="2"/><path d="M10 12h2v6"/><path d="M10 18h4"/></svg>
<div class="t " style="left:1319.30px;top:308.46px;font-size:16px;letter-spacing:0.137px;-webkit-text-stroke:0.25px currentColor;color:#444;">11725760</div>
<svg class="a" style="left:1295px;top:354px;" width="19" height="19" viewBox="0 0 24 24" fill="none" stroke="#aaa" stroke-width="1.6" stroke-linecap="round" stroke-linejoin="round"><path d="M21 7.5V6a2 2 0 0 0-2-2H5a2 2 0 0 0-2 2v14a2 2 0 0 0 2 2h3.5"/><path d="M16 2v4"/><path d="M8 2v4"/><path d="M3 10h5"/><path d="M17.5 17.5 16 16.3V14"/><circle cx="16" cy="16" r="6"/></svg>
<div class="t " style="left:1322.18px;top:356.06px;font-size:16px;letter-spacing:0.459px;color:#484848;">October 28th, 2025</div>
<div class="a" style="left:1295.5px;top:403.5px;width:17px;height:17px;background:#a3e39c;border-radius:50%"></div>
<div class="t " style="left:1299.30px;top:407.11px;font-size:10.5px;letter-spacing:0.475px;color:#2f4b2f;">AI</div>
<div class="t " style="left:1322.50px;top:404.86px;font-size:16px;letter-spacing:0.217px;-webkit-text-stroke:0.25px currentColor;color:#444;">Admin inBuild</div>
<svg class="a" style="left:1295px;top:451px;" width="18" height="18" viewBox="0 0 24 24" fill="none" stroke="#999" stroke-width="1.6" stroke-linecap="round" stroke-linejoin="round"><path d="M12 2v20"/><path d="M17 5H9.5a3.5 3.5 0 0 0 0 7h5a3.5 3.5 0 0 1 0 7H6"/></svg>
<div class="t " style="left:1321.70px;top:454.06px;font-size:16px;letter-spacing:0.593px;-webkit-text-stroke:0.25px currentColor;color:#444;">2.32</div>
<svg class="a" style="left:1363px;top:452px;" width="18" height="18" viewBox="0 0 24 24" fill="none" stroke="#ccc" stroke-width="1.5" stroke-linecap="round" stroke-linejoin="round"><circle cx="12" cy="12" r="10"/><path d="M12 16v-4"/><path d="M12 8h.01"/></svg>
<svg class="a" style="left:1295px;top:500px;" width="18" height="18" viewBox="0 0 24 24" fill="none" stroke="#aaa" stroke-width="1.6" stroke-linecap="round" stroke-linejoin="round"><path d="M19 7V4a1 1 0 0 0-1-1H5a2 2 0 0 0 0 4h15a1 1 0 0 1 1 1v4h-3a2 2 0 0 0 0 4h3a1 1 0 0 0 1-1v-2a1 1 0 0 0-1-1"/><path d="M3 5v14a2 2 0 0 0 2 2h15a1 1 0 0 0 1-1v-4"/></svg>
<div class="t " style="left:1321.70px;top:502.46px;font-size:16px;letter-spacing:0.593px;-webkit-text-stroke:0.25px currentColor;color:#444;">2.32</div>
<svg class="a" style="left:1363px;top:500px;" width="18" height="18" viewBox="0 0 24 24" fill="none" stroke="#ccc" stroke-width="1.5" stroke-linecap="round" stroke-linejoin="round"><circle cx="12" cy="12" r="10"/><path d="M12 16v-4"/><path d="M12 8h.01"/></svg>
<svg class="a" style="left:1296px;top:549px;" width="16" height="16" viewBox="0 0 24 24" fill="none" stroke="#3aa0de" stroke-width="2.2" stroke-linecap="round" stroke-linejoin="round"><path d="M5 12h14"/><path d="M12 5v14"/></svg>
<div class="t " style="left:1318.00px;top:549.75px;font-size:14px;letter-spacing:0.154px;-webkit-text-stroke:0.4px currentColor;color:#3aa0de;">Add Transaction</div>
<div class="t " style="left:1303.42px;top:593.56px;font-size:16px;letter-spacing:-0.560px;color:#555;">LOB</div>
<div class="a" style="left:1343px;top:590px;width:22px;height:21px;border:1px solid #e6e6e6;border-radius:5px"></div>
<svg class="a" style="left:1347px;top:594px;" width="14" height="14" viewBox="0 0 24 24" fill="none" stroke="#444" stroke-width="2" stroke-linecap="round" stroke-linejoin="round"><path d="M18 6 6 18"/><path d="m6 6 12 12"/></svg>
<div class="a" style="left:1284.5px;top:638px;width:212px;height:89px;background:#eefbf0;border:1px solid #d3efd8;border-radius:8px"></div>
<svg class="a" style="left:1298px;top:673px;" width="20" height="20" viewBox="0 0 24 24" fill="none" stroke="#3f9a56" stroke-width="1.7" stroke-linecap="round" stroke-linejoin="round"><path d="M21.801 10A10 10 0 1 1 17 3.335"/><path d="m9 11 3 3L22 4"/></svg>
<div class="t " style="left:1327.5px;top:653.76px;font-size:16px;color:#3d6b47;">No</div>
<div class="t " style="left:1326.86px;top:675.46px;font-size:16px;letter-spacing:0.369px;color:#3d6b47;">duplicates</div>
<div class="t " style="left:1326.86px;top:697.26px;font-size:16px;letter-spacing:0.689px;color:#3d6b47;">detected</div>
<svg class="a" style="left:1422px;top:674px;" width="19" height="19" viewBox="0 0 24 24" fill="none" stroke="#333" stroke-width="2" stroke-linecap="round" stroke-linejoin="round"><path d="M3 12a9 9 0 0 1 9-9 9.75 9.75 0 0 1 6.74 2.74L21 8"/><path d="M21 3v5h-5"/><path d="M21 12a9 9 0 0 1-9 9 9.75 9.75 0 0 1-6.74-2.74L3 16"/><path d="M8 16H3v5"/></svg>
<svg class="a" style="left:1457px;top:674px;" width="19" height="19" viewBox="0 0 24 24" fill="none" stroke="#333" stroke-width="2" stroke-linecap="round" stroke-linejoin="round"><path d="M3 12a9 9 0 0 1 9-9 9.75 9.75 0 0 1 6.74 2.74L21 8"/><path d="M21 3v5h-5"/><path d="M21 12a9 9 0 0 1-9 9 9.75 9.75 0 0 1-6.74-2.74L3 16"/><path d="M8 16H3v5"/></svg>
<div class="a" style="left:1267px;top:745.5px;width:248px;height:1px;background:#e3e3e3"></div>
<div class="a" style="left:1284.5px;top:764.5px;width:212px;height:42px;background:#1a1a1b;border-radius:7px"></div>
<div class="t " style="left:1363.98px;top:778.16px;font-size:16px;letter-spacing:0.508px;-webkit-text-stroke:0.4px currentColor;color:#fff;">Submit</div>
<svg class="a" style="left:1070px;top:410px;filter:drop-shadow(0px 3px 2.5px rgba(0,0,0,0.3))" width="70" height="90" viewBox="1070 410 70 90"><path id="cur" d="M1088.5 428.5 L1088.9 468.4 L1098.3 463.7 L1105.5 479.4 L1111.8 477.7 L1106.3 461.6 L1117.4 458.6 Z" fill="#fff" stroke="#fff" stroke-width="6.5" stroke-linejoin="round"/><path d="M1088.5 428.5 L1088.9 468.4 L1098.3 463.7 L1105.5 479.4 L1111.8 477.7 L1106.3 461.6 L1117.4 458.6 Z" fill="#000" stroke="#000" stroke-width="1" stroke-linejoin="round"/></svg>
</div></div>
<div id="cardb"></div>
<svg class="a" style="left:0;top:804px" width="20" height="20" viewBox="0 804 20 20"><path d="M0 813 A11.5 11.5 0 0 0 9 824 L0 824 Z" fill="#8a8a8a"/><path d="M0 813 A11.5 11.5 0 0 0 9 824" fill="none" stroke="#444" stroke-width="1.2"/><path d="M1.2 812.5 A11.5 11.5 0 0 0 9.8 823.5" fill="none" stroke="#fff" stroke-width="0.9"/></svg>
<svg class="a" style="left:1502px;top:804px" width="20" height="20" viewBox="1502 804 20 20"><path d="M1522 814.4 A11 11 0 0 1 1514.5 824 L1522 824 Z" fill="#111"/><path d="M1521.5 813.6 A11 11 0 0 1 1513.8 823.6" fill="none" stroke="#fff" stroke-width="1"/></svg>
</body></html>
